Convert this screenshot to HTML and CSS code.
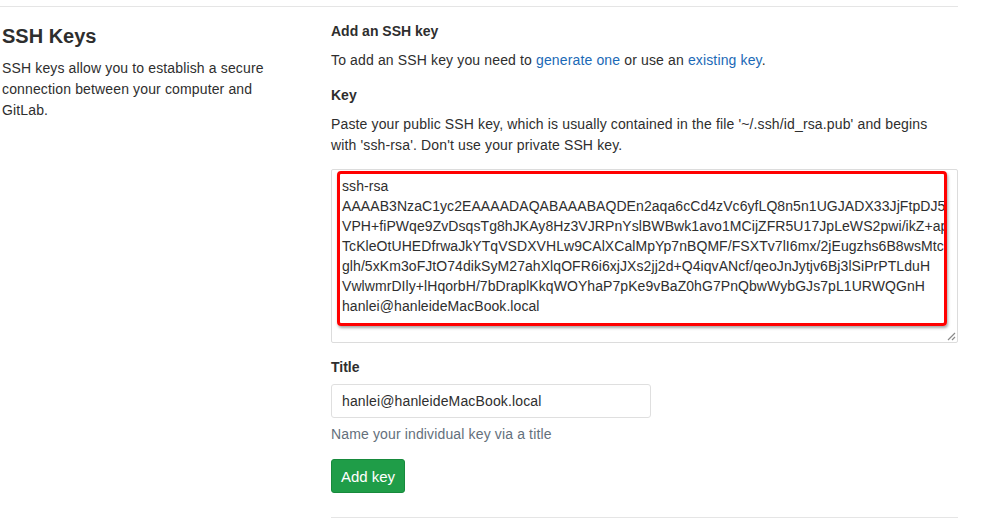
FILE: index.html
```html
<!DOCTYPE html>
<html>
<head>
<meta charset="utf-8">
<link rel="stylesheet" href="styles.css">
</head>
<body>
<div class="page">
  <div class="row">
    <div class="side">
      <h2 class="side-title">SSH Keys</h2>
      <p class="side-text">SSH keys allow you to establish a secure connection between your computer and GitLab.</p>
    </div>
    <div class="main">
      <h5 class="label first">Add an SSH key</h5>
      <p class="text">To add an SSH key you need to <a href="#">generate one</a> or use an <a href="#">existing key</a>.</p>
      <label class="label">Key</label>
      <p class="text narrow">Paste your public SSH key, which is usually contained in the file '~/.ssh/id_rsa.pub' and begins with 'ssh-rsa'. Don't use your private SSH key.</p>
      <div class="textarea">
        <div class="highlight">ssh-rsa<br>AAAAB3NzaC1yc2EAAAADAQABAAABAQDEn2aqa6cCd4zVc6yfLQ8n5n1UGJADX33JjFtpDJ5<br>VPH+fiPWqe9ZvDsqsTg8hJKAy8Hz3VJRPnYslBWBwk1avo1MCijZFR5U17JpLeWS2pwi/ikZ+ap<br>TcKleOtUHEDfrwaJkYTqVSDXVHLw9CAlXCalMpYp7nBQMF/FSXTv7lI6mx/2jEugzhs6B8wsMtc<br>glh/5xKm3oFJtO74dikSyM27ahXlqOFR6i6xjJXs2jj2d+Q4iqvANcf/qeoJnJytjv6Bj3lSiPrPTLduH<br>VwlwmrDIly+lHqorbH/7bDraplKkqWOYhaP7pKe9vBaZ0hG7PnQbwWybGJs7pL1URWQGnH<br>hanlei@hanleideMacBook.local</div>
        <svg class="grip" width="9" height="9" viewBox="0 0 9 9"><path d="M8 1L1 8M8 5L5 8" stroke="#8a8a8a" stroke-width="1.2"/></svg>
      </div>
      <label class="label title-label">Title</label>
      <div class="input">hanlei@hanleideMacBook.local</div>
      <p class="help">Name your individual key via a title</p>
      <button class="btn">Add key</button>
    </div>
  </div>
  <div class="bottom-rule"></div>
</div>
</body>
</html>
```

FILE: styles.css
```css
* { box-sizing: border-box; }
body {
  margin: 0;
  background: #fff;
  font-family: "Liberation Sans", Arial, sans-serif;
  font-size: 14px;
  letter-spacing: 0.14px;
  color: #2e2e2e;
}
.page {
  width: 958px;
  padding-top: 6px;
}
.row {
  display: grid;
  grid-template-columns: 331px 627px;
  border-top: 1px solid #e5e5e5;
}
.side { padding-left: 2px; }
.side-title {
  margin: 17px 0 0;
  font-size: 20px;
  font-weight: 600;
  line-height: 24px;
  letter-spacing: 0;
  color: #2e2e2e;
}
.side-text {
  margin: 10px 0 0;
  line-height: 21px;
  width: 290px;
}
.main { display: flex; flex-direction: column; align-items: flex-start; }
.label {
  display: block;
  margin: 14px 0 0;
  font-size: 14px;
  font-weight: 700;
  line-height: 20px;
  letter-spacing: 0;
}
.label.first { margin-top: 14px; }
.text {
  margin: 9px 0 0;
  line-height: 21px;
}
.text.narrow { max-width: 610px; }
a { color: #1b69b6; text-decoration: none; }
.textarea {
  position: relative;
  margin-top: 13px;
  width: 627px;
  height: 174px;
  border: 1px solid #dcdcdc;
  border-radius: 2px;
  padding: 1px 0 0 5px;
}
.highlight {
  width: 610px;
  height: 155px;
  border: 3px solid #f00;
  border-radius: 4px;
  box-shadow: 1px 2px 3px rgba(0,0,0,0.35);
  padding: 2px 0 0 2px;
  line-height: 20px;
  letter-spacing: 0.07px;
  color: #2e2e2e;
  white-space: nowrap;
  overflow: hidden;
}
.grip { position: absolute; right: 1px; bottom: 1px; }
.title-label { margin-top: 14px; }
.input {
  margin-top: 7px;
  width: 320px;
  height: 34px;
  border: 1px solid #dfdfdf;
  border-radius: 3px;
  padding: 0 10px;
  line-height: 32px;
}
.help {
  margin: 6px 0 0;
  line-height: 20px;
  color: #64707c;
}
.btn {
  margin-top: 15px;
  width: 74px;
  height: 34px;
  background: #1f9d48;
  border: 1px solid #178a3c;
  border-radius: 3px;
  color: #fff;
  font-family: inherit;
  font-size: 15px;
  letter-spacing: 0;
  padding: 0;
}
.bottom-rule {
  margin: 24px 0 0 331px;
  border-top: 1px solid #e5e5e5;
}
```
